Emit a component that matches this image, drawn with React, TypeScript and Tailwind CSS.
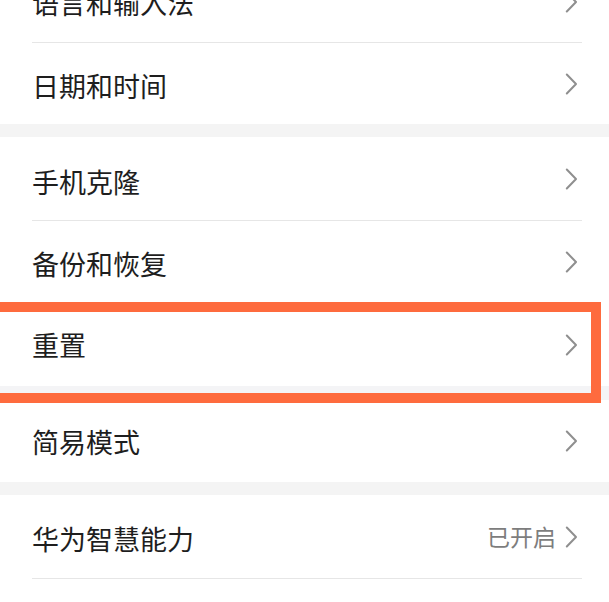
import React from "react";

const font = { fontFamily: '"Noto Sans CJK SC", "Noto Sans", sans-serif' };

function Chevron() {
  return (
    <svg width="13" height="22" viewBox="0 0 13 22" fill="none" className="shrink-0">
      <path d="M1.8 1.5 L11 11 L1.8 20.5" stroke="#8f8f8f" strokeWidth="2" strokeLinecap="round" strokeLinejoin="round" />
    </svg>
  );
}

function Row({ label, value, h, ty = 0 }: { label: string; value?: string; h: string; ty?: string | number }) {
  return (
    <div className={`flex items-center justify-between pl-[32px] pr-[31px] bg-white ${h}`}>
      <span className={`text-[27px] leading-none text-[#1e1e1e] ${ty}`}>{label}</span>
      <div className="flex items-center gap-[9px]">
        {value && <span className="text-[23px] leading-none text-[#7d7d7d]">{value}</span>}
        <Chevron />
      </div>
    </div>
  );
}

function Divider() {
  return <div className="h-px bg-[#e6e6e6] ml-[32px] mr-[27px]" />;
}

export default function App() {
  return (
    <div className="relative w-[609px] h-[602px] overflow-hidden bg-white" style={font}>
      <div className="-mt-[39px]">
        <Row label="语言和输入法" h="h-[81px]" ty="translate-y-[1px]" />
        <Divider />
        <Row label="日期和时间" h="h-[81px]" ty="translate-y-[2px]" />
        <div className="h-[13px] bg-[#f4f4f4]" />
        <Row label="手机克隆" h="h-[83px]" ty="translate-y-[3px]" />
        <Divider />
        <Row label="备份和恢复" h="h-[82px]" ty="translate-y-[1px]" />
        <Row label="重置" h="h-[83px]" />
        <div className="h-[14px] bg-[#f4f4f6]" />
        <Row label="简易模式" h="h-[82px]" />
        <div className="h-[13px] bg-[#f4f4f4]" />
        <Row label="华为智慧能力" value="已开启" h="h-[83px]" ty="translate-y-[2px]" />
        <Divider />
      </div>
      <div className="absolute left-[-10px] top-[302px] w-[611px] h-[101px] border-[10px] border-[#fe6b3e]" />
    </div>
  );
}
